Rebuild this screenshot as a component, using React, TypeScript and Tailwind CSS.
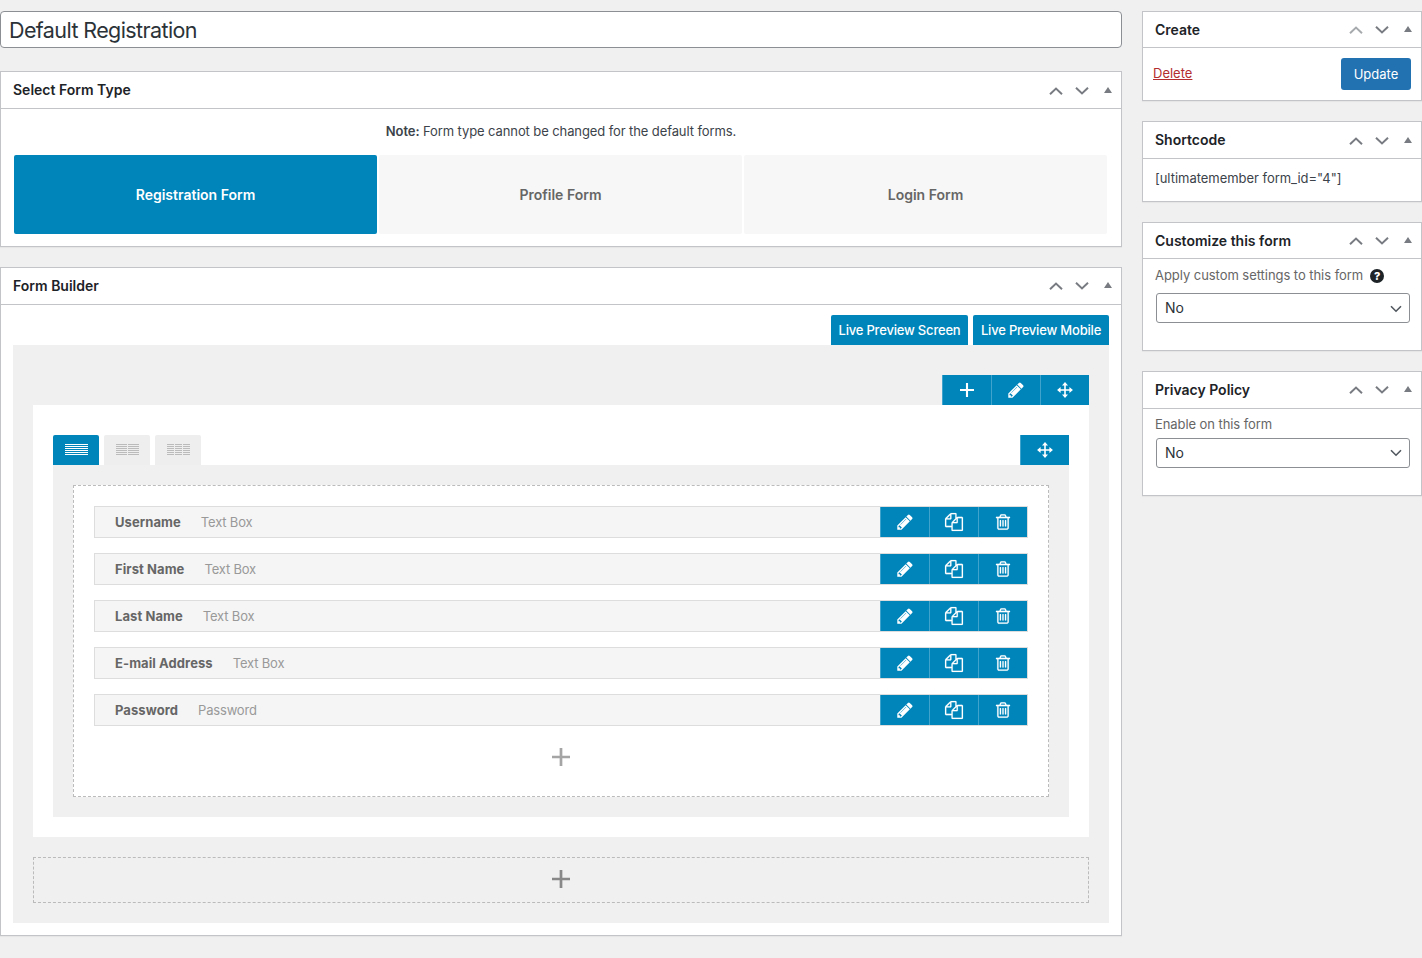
import type { ReactNode } from "react";

const PENCIL =
  "M491 1536l91-91-235-235-91 91v107h128v128h107zm523-928q0-22-22-22-10 0-17 7l-542 542q-7 7-7 17 0 22 22 22 10 0 17-7l542-542q7-7 7-17zm-54-192l416 416-832 832h-416v-416zm683 96q0 53-37 90l-166 166-416-416 166-165q36-38 90-38 53 0 91 38l235 234q37 39 37 91z";
const FILES =
  "M1696 384q40 0 68 28t28 68v1216q0 40-28 68t-68 28h-960q-40 0-68-28t-28-68v-288h-544q-40 0-68-28t-28-68v-672q0-40 20-88t48-76l408-408q28-28 76-48t88-20h416q40 0 68 28t28 68v328q68-40 128-40h416zm-544 213l-299 299h299v-299zm-640-384l-299 299h299v-299zm196 647l316-316v-416h-384v416q0 40-28 68t-68 28h-416v640h512v-256q0-40 20-88t48-76zm956 804v-1152h-384v416q0 40-28 68t-68 28h-416v640h896z";
const TRASH =
  "M704 736v576q0 14-9 23t-23 9h-64q-14 0-23-9t-9-23v-576q0-14 9-23t23-9h64q14 0 23 9t9 23zm256 0v576q0 14-9 23t-23 9h-64q-14 0-23-9t-9-23v-576q0-14 9-23t23-9h64q14 0 23 9t9 23zm256 0v576q0 14-9 23t-23 9h-64q-14 0-23-9t-9-23v-576q0-14 9-23t23-9h64q14 0 23 9t9 23zm128 724v-948h-896v948q0 22 7 40.5t14.5 27 10.5 8.5h832q3 0 10.5-8.5t14.5-27 7-40.5zm-672-1076h448l-48-117q-7-9-17-11h-317q-10 2-17 11zm928 32v64q0 14-9 23t-23 9h-96v948q0 83-47 143.5t-113 60.5h-832q-66 0-113-58.5t-47-141.5v-952h-96q-14 0-23-9t-9-23v-64q0-14 9-23t23-9h309l70-167q15-37 54-63t79-26h320q40 0 79 26t54 63l70 167h309q14 0 23 9t9 23z";

function Glyph({ d, bold }: { d: string; bold?: boolean }) {
  return (
    <svg
      viewBox="0 0 1792 1792"
      fill="currentColor"
      stroke="currentColor"
      strokeWidth={bold ? 14 : 0}
      className="size-[18px] overflow-visible"
    >
      <path d={d} />
    </svg>
  );
}

function Move() {
  return (
    <svg viewBox="0 0 16 16" fill="currentColor" className="size-4">
      <path d="M8 0.1L11 3.6H8.8V7.2H12.4V5L15.9 8L12.4 11V8.8H8.8V12.4H11L8 15.9L5 12.4H7.2V8.8H3.6V11L0.1 8L3.6 5V7.2H7.2V3.6H5Z" />
    </svg>
  );
}

function Plus({ className }: { className: string }) {
  return (
    <svg viewBox="0 0 18 18" fill="none" stroke="currentColor" className={className}>
      <path d="M9 0V18M0 9H18" strokeWidth="2.7" />
    </svg>
  );
}

function Chevron({ up, faded }: { up?: boolean; faded?: boolean }) {
  return (
    <svg
      viewBox="0 0 14 8"
      fill="none"
      stroke={faded ? "#a7aaad" : "#787c82"}
      strokeWidth="2"
      className="h-2 w-3.5"
    >
      <path d={up ? "M1 7.2L7 1.6L13 7.2" : "M1 0.8L7 6.4L13 0.8"} />
    </svg>
  );
}

function Panel({
  title,
  className,
  headClass,
  iconClass,
  firstItem,
  children,
}: {
  title: string;
  className: string;
  headClass: string;
  iconClass?: string;
  firstItem?: boolean;
  children: ReactNode;
}) {
  return (
    <section
      className={`flex flex-col border border-[#c3c4c7] bg-white shadow-[0_1px_1px_rgba(0,0,0,0.04)] ${className}`}
    >
      <header
        className={`flex shrink-0 items-center justify-between border-b border-[#c3c4c7] pl-3 pr-[9px] ${headClass}`}
      >
        <h2 className="text-[14px] leading-5 font-semibold text-[#1d2327]">{title}</h2>
        <div className={`flex items-center ${iconClass ?? ""}`}>
          <Chevron up faded={firstItem} />
          <span className="ml-3 flex">
            <Chevron />
          </span>
          <svg viewBox="0 0 8 6" className="mb-0.5 ml-[15px] h-1.5 w-2" fill="#787c82">
            <path d="M4 0L8 6H0Z" />
          </svg>
        </div>
      </header>
      {children}
    </section>
  );
}

function Tool({ children }: { children: ReactNode }) {
  return (
    <button className="flex h-[30px] w-[49px] items-center justify-center border-l border-[#3fa3cc] bg-[#0085ba] text-white">
      {children}
    </button>
  );
}

function Columns({ count, active }: { count: number; active?: boolean }) {
  const w = (23 - (count - 1)) / count;
  return (
    <button
      className={`flex h-[30px] w-[46px] rounded-t-[2px] pt-[9px] pl-3 ${
        active ? "bg-[#0085ba] text-white" : "bg-[#eeeeee] text-[#bbbbbb]"
      }`}
    >
      <svg viewBox="0 0 23 11" fill="currentColor" className="h-[11px] w-[23px]">
        {Array.from({ length: count }).map((_, c) =>
          [0, 2, 4, 6, 8, 10].map((y) => (
            <rect key={`${c}-${y}`} x={Math.round(c * (w + 1))} y={y} width={Math.round(w)} height="1" />
          )),
        )}
      </svg>
    </button>
  );
}

function Select({ value, arrowClass }: { value: string; arrowClass?: string }) {
  return (
    <div className="ml-px flex h-[30px] w-[254px] items-center justify-between rounded-[3px] border border-[#8c8f94] bg-white pr-[7px] pl-2 text-[14px] text-[#2c3338]">
      <span className="leading-5">{value}</span>
      <svg
        viewBox="0 0 12 8"
        fill="none"
        stroke="#50575e"
        strokeWidth="1.6"
        className={`h-2 w-3 ${arrowClass ?? ""}`}
      >
        <path d="M1 1.2L6 6.2L11 1.2" />
      </svg>
    </div>
  );
}

const fields = [
  { name: "Username", type: "Text Box" },
  { name: "First Name", type: "Text Box" },
  { name: "Last Name", type: "Text Box" },
  { name: "E-mail Address", type: "Text Box" },
  { name: "Password", type: "Password" },
];

const formTypes = ["Registration Form", "Profile Form", "Login Form"];

export default function App() {
  return (
    <div className="flex h-[958px] w-[1422px] gap-5 overflow-hidden bg-[#f0f0f1] pt-[11px] font-['Inter',sans-serif] text-[13px] text-[#3c434a]">
      <main className="flex w-[1122px] flex-col">
        <div className="flex h-[37px] items-center rounded-[4px] border border-[#8c8f94] bg-white pt-0.5 pl-2 text-[21.5px] tracking-[-0.6px] text-[#2c3338]">
          <span>Default Registration</span>
        </div>

        <Panel title="Select Form Type" className="mt-[23px] h-[176px]" headClass="h-[37px]" iconClass="pt-px">
          <p className="mt-3 text-center leading-5 tracking-[-0.1px]">
            <strong className="font-semibold">Note:</strong> Form type cannot be changed for the default forms.
          </p>
          <div className="mt-[14px] flex gap-0.5 pl-[13px] text-[14px] font-semibold">
            {formTypes.map((t, i) => (
              <div
                key={t}
                className={`flex h-[79px] w-[363px] items-center justify-center rounded-[2px] ${
                  i === 0 ? "bg-[#0085ba] text-white" : "bg-[#f7f7f7] text-[#666666]"
                }`}
              >
                {t}
              </div>
            ))}
          </div>
        </Panel>

        <Panel title="Form Builder" className="mt-5 h-[669px]" headClass="h-[37px]">
          <div className="mt-[10px] flex justify-end gap-[5px] pr-3 font-medium tracking-[-0.19px] text-white">
            <button className="h-[30px] w-[137px] rounded-t-[2px] bg-[#0085ba] pt-0.5">Live Preview Screen</button>
            <button className="h-[30px] w-[136px] rounded-t-[2px] bg-[#0085ba] pt-0.5">Live Preview Mobile</button>
          </div>
          <div className="mx-3 flex h-[578px] flex-col bg-[#f0f0f0] px-5 pt-[30px]">
            <div className="flex justify-end">
              <Tool>
                <Plus className="size-3.5" />
              </Tool>
              <Tool>
                <Glyph d={PENCIL} />
              </Tool>
              <Tool>
                <Move />
              </Tool>
            </div>
            <div className="flex h-[432px] flex-col bg-white px-5 pt-[30px]">
              <div className="flex justify-between">
                <div className="flex gap-[5px]">
                  <Columns count={1} active />
                  <Columns count={2} />
                  <Columns count={3} />
                </div>
                <Tool>
                  <Move />
                </Tool>
              </div>
              <div className="h-[352px] bg-[#f0f0f0] p-5">
                <div className="flex h-[312px] flex-col gap-[15px] border border-dashed border-[#bbbbbb] bg-white px-5 pt-5">
                  {fields.map((f) => (
                    <div
                      key={f.name}
                      className="flex h-8 w-[934px] items-center justify-between border border-[#dddddd] bg-[#f5f5f5] pl-5"
                    >
                      <div className="flex gap-5 pt-0.5">
                        <span className="font-bold tracking-[0.08px] text-[#666666]">{f.name}</span>
                        <span className="tracking-[-0.18px] text-[#999999]">{f.type}</span>
                      </div>
                      <div className="flex">
                        <Tool>
                          <Glyph d={PENCIL} />
                        </Tool>
                        <Tool>
                          <Glyph d={FILES} bold />
                        </Tool>
                        <Tool>
                          <Glyph d={TRASH} bold />
                        </Tool>
                      </div>
                    </div>
                  ))}
                  <div className="mt-[7px] flex justify-center">
                    <Plus className="size-[18px] text-[#a5a5a5]" />
                  </div>
                </div>
              </div>
            </div>
            <div className="mt-5 flex h-[46px] items-center justify-center border border-dashed border-[#bbbbbb] pb-0.5">
              <Plus className="size-[18px] text-[#888888]" />
            </div>
          </div>
        </Panel>
      </main>

      <aside className="flex w-[280px] flex-col">
        <Panel title="Create" className="h-[90px]" headClass="h-9" firstItem>
          <div className="flex justify-between p-[10px]">
            <a className="mt-1.5 h-5 leading-[18px] text-[#b32d2e] underline">Delete</a>
            <button className="h-8 w-[70px] rounded-[3px] bg-[#2271b1] pt-0.5 text-white">Update</button>
          </div>
        </Panel>
        <Panel title="Shortcode" className="mt-5 h-[81px]" headClass="h-[37px]" iconClass="pt-px">
          <p className="mt-[9px] pl-3 leading-5 tracking-[-0.03px]">[ultimatemember form_id="4"]</p>
        </Panel>
        <Panel title="Customize this form" className="mt-5 h-[129px]" headClass="h-9">
          <div className="flex flex-col px-3 pt-[7px]">
            <div className="mb-[7px] flex h-5 items-center gap-[7px] text-[#666666]">
              <span className="tracking-[-0.05px]">Apply custom settings to this form</span>
              <span className="flex size-3.5 items-center justify-center rounded-full bg-[#1d2327] text-[11px] leading-none font-extrabold text-white">
                ?
              </span>
            </div>
            <Select value="No" arrowClass="mt-0.5" />
          </div>
        </Panel>
        <Panel title="Privacy Policy" className="mt-5 h-[125px]" headClass="h-[37px]">
          <div className="flex flex-col px-3 pt-[5px]">
            <span className="mb-1 h-5 leading-5 tracking-[-0.08px] text-[#666666]">Enable on this form</span>
            <Select value="No" />
          </div>
        </Panel>
      </aside>
    </div>
  );
}
